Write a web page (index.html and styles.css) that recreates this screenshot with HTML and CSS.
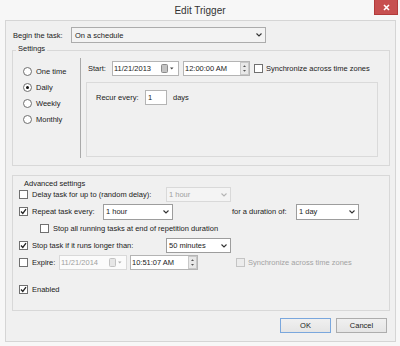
FILE: index.html
```html
<!DOCTYPE html>
<html lang="en">
<head>
    <meta charset="UTF-8">
    <title>Edit Trigger</title>
    <link rel="stylesheet" href="styles.css">
</head>
<body>
    <div class="window">
        <div class="titlebar">
            <span></span>
            <span class="title">Edit Trigger</span>
            <span class="close-btn">
                <svg viewBox="0 0 7 7" width="7" height="7"><path d="M1 1L6 6M6 1L1 6" stroke="#fff" stroke-width="1.6" fill="none"/></svg>
            </span>
        </div>
        <div class="client">
            <div class="begin-row">
                <span class="begin-label">Begin the task:</span>
                <div class="combo combo-begin">
                    <span>On a schedule</span>
                    <svg class="chevron" viewBox="0 0 6 4"><path d="M0.5 0.5L3 3L5.5 0.5" stroke="#333" stroke-width="1.1" fill="none"/></svg>
                </div>
            </div>

            <div class="group settings">
                <div class="group-title">Settings</div>
                <div class="settings-body">
                    <div class="recurrence">
                        <div class="radio-row"><span class="radio"></span>One time</div>
                        <div class="radio-row"><span class="radio on"></span>Daily</div>
                        <div class="radio-row"><span class="radio"></span>Weekly</div>
                        <div class="radio-row"><span class="radio"></span>Monthly</div>
                    </div>
                    <div class="schedule">
                        <div class="start-row">
                            <span class="start-label">Start:</span>
                            <div class="field date-field">
                                <span>11/21/2013</span>
                                <svg class="cal" viewBox="0 0 13 9"><rect x="0.5" y="0.5" width="6" height="8" rx="1" fill="#c4c4c4" stroke="#8c8c8c"/><path d="M9 3.5H12.5L10.75 5.5Z" fill="#444"/></svg>
                            </div>
                            <div class="field time-field">
                                <span>12:00:00 AM</span>
                                <span class="spin"><svg viewBox="0 0 7 11"><path d="M2 4H5L3.5 2.2Z M2 7H5L3.5 8.8Z" fill="#555"/></svg></span>
                            </div>
                            <span class="checkbox sync-check"></span>
                            <span>Synchronize across time zones</span>
                        </div>
                        <div class="recur-panel">
                            <div class="recur-row">
                                <span class="recur-label">Recur every:</span>
                                <div class="field recur-input">1</div>
                                <span class="days">days</span>
                            </div>
                        </div>
                    </div>
                </div>
            </div>

            <div class="group advanced">
                <div class="group-title">Advanced settings</div>
                <div class="adv-row">
                    <span class="checkbox"></span>
                    <span class="wide-label">Delay task for up to (random delay):</span>
                    <div class="combo combo-small disabled">
                        <span>1 hour</span>
                        <svg class="chevron" viewBox="0 0 6 4"><path d="M0.5 0.5L3 3L5.5 0.5" stroke="#b5b5b5" stroke-width="1.1" fill="none"/></svg>
                    </div>
                </div>
                <div class="adv-row">
                    <span class="checkbox checked"><svg viewBox="0 0 7 7"><path d="M1 3.5L2.8 5.5L6 1.2" stroke="#222" stroke-width="1.3" fill="none"/></svg></span>
                    <span class="repeat-label">Repeat task every:</span>
                    <div class="combo combo-white repeat-combo">
                        <span>1 hour</span>
                        <svg class="chevron" viewBox="0 0 6 4"><path d="M0.5 0.5L3 3L5.5 0.5" stroke="#333" stroke-width="1.1" fill="none"/></svg>
                    </div>
                    <span class="duration-label">for a duration of:</span>
                    <div class="combo combo-white duration-combo">
                        <span>1 day</span>
                        <svg class="chevron" viewBox="0 0 6 4"><path d="M0.5 0.5L3 3L5.5 0.5" stroke="#333" stroke-width="1.1" fill="none"/></svg>
                    </div>
                </div>
                <div class="adv-row sub-row">
                    <span class="checkbox"></span>
                    <span>Stop all running tasks at end of repetition duration</span>
                </div>
                <div class="adv-row">
                    <span class="checkbox checked"><svg viewBox="0 0 7 7"><path d="M1 3.5L2.8 5.5L6 1.2" stroke="#222" stroke-width="1.3" fill="none"/></svg></span>
                    <span class="wide-label">Stop task if it runs longer than:</span>
                    <div class="combo combo-white combo-small">
                        <span>50 minutes</span>
                        <svg class="chevron" viewBox="0 0 6 4"><path d="M0.5 0.5L3 3L5.5 0.5" stroke="#333" stroke-width="1.1" fill="none"/></svg>
                    </div>
                </div>
                <div class="adv-row">
                    <span class="checkbox"></span>
                    <span class="expire-label">Expire:</span>
                    <div class="field date-field expire-date disabled">
                        <span>11/21/2014</span>
                        <svg class="cal" viewBox="0 0 13 9"><rect x="0.5" y="0.5" width="6" height="8" rx="1" fill="#e6e6e6" stroke="#c2c2c2"/><path d="M9 3.5H12.5L10.75 5.5Z" fill="#b0b0b0"/></svg>
                    </div>
                    <div class="field time-field expire-time">
                        <span>10:51:07 AM</span>
                        <span class="spin"><svg viewBox="0 0 7 11"><path d="M2 4H5L3.5 2.2Z M2 7H5L3.5 8.8Z" fill="#555"/></svg></span>
                    </div>
                    <span class="checkbox disabled expire-sync"></span>
                    <span class="muted">Synchronize across time zones</span>
                </div>
                <div class="adv-row enabled-row">
                    <span class="checkbox checked"><svg viewBox="0 0 7 7"><path d="M1 3.5L2.8 5.5L6 1.2" stroke="#222" stroke-width="1.3" fill="none"/></svg></span>
                    <span>Enabled</span>
                </div>
            </div>

            <div class="buttons">
                <button class="btn btn-default">OK</button>
                <button class="btn">Cancel</button>
            </div>
        </div>
    </div>
</body>
</html>
```

FILE: styles.css
```css
* {
    box-sizing: border-box;
}
body {
    margin: 0;
    background-color: #f7f7f7;
    font-family: "Liberation Sans", Arial, sans-serif;
    font-size: 7.5px;
    color: #1b1b1b;
}
.window {
    width: 400px;
    height: 346px;
    background-color: #f7f7f7;
}
.titlebar {
    display: grid;
    grid-template-columns: 1fr auto 1fr;
    align-items: center;
    height: 20px;
}
.title {
    font-size: 10px;
    line-height: 1;
    padding-top: 1px;
    color: #333;
}
.close-btn {
    justify-self: end;
    align-self: start;
    display: flex;
    align-items: center;
    justify-content: center;
    width: 24px;
    height: 15px;
    margin-right: 2px;
    background-color: #c75050;
    border: 1px solid #b23b3b;
    border-top: none;
}
.client {
    margin-left: 5px;
    width: 391px;
    height: 322px;
    border: 1px solid #d5d5d5;
    background-color: #f0f0f0;
}
.begin-row {
    display: flex;
    align-items: center;
    height: 16px;
    margin-top: 6px;
    padding-left: 7px;
}
.begin-label {
    width: 58px;
}
.combo {
    display: flex;
    align-items: center;
    justify-content: space-between;
    height: 15px;
    border: 1px solid #acacac;
    background-color: #f3f3f3;
    padding: 0 3px 0 2px;
}
.combo-begin {
    width: 195px;
    height: 16px;
    padding-left: 3px;
}
.combo-white {
    background-color: #fff;
    border-color: #9d9d9d;
}
.combo-small {
    width: 65px;
}
.combo.disabled {
    background-color: #f4f4f4;
    border-color: #d9d9d9;
    color: #a0a0a0;
}
.chevron {
    width: 6px;
    height: 4px;
}
.group {
    border: 1px solid #d8d8d8;
    margin: 0 5px 0 6px;
}
.group-title {
    display: table;
    margin: -7px 0 -3px 3px;
    padding: 0 2px;
    line-height: 10px;
    background-color: #f0f0f0;
}
.settings {
    margin-top: 7px;
    padding-bottom: 7px;
}
.settings-body {
    display: flex;
}
.recurrence {
    width: 67px;
    padding-top: 12px;
}
.radio-row {
    display: flex;
    align-items: center;
    height: 16px;
    padding-left: 10px;
}
.radio {
    display: flex;
    align-items: center;
    justify-content: center;
    width: 9px;
    height: 9px;
    margin-right: 4px;
    border: 1px solid #6f6f6f;
    border-radius: 50%;
    background-color: #fff;
}
.radio.on::after {
    content: "";
    width: 3px;
    height: 3px;
    border-radius: 50%;
    background-color: #111;
}
.schedule {
    flex: 1;
    height: 100px;
    margin-top: 7px;
    padding: 3px 0 0 7px;
    border-left: 1px solid #a9a9a9;
}
.start-row {
    display: flex;
    align-items: center;
    height: 15px;
}
.start-label {
    width: 24px;
}
.field {
    display: flex;
    align-items: center;
    height: 15px;
    border: 1px solid #b4b4b4;
    background-color: #fff;
    padding-left: 1px;
}
.field.disabled {
    border-color: #d9d9d9;
    background-color: #fbfbfb;
    color: #a0a0a0;
}
.date-field {
    width: 67px;
    justify-content: space-between;
    padding-right: 4px;
}
.cal {
    width: 13px;
    height: 9px;
}
.time-field {
    width: 67px;
    margin-left: 4px;
}
.spin {
    display: flex;
    width: 9px;
    height: 13px;
    margin-left: auto;
    border: 1px solid #c8c8c8;
    background-color: #e8e8e8;
}
.spin svg {
    width: 7px;
    height: 11px;
}
.checkbox {
    display: flex;
    align-items: center;
    justify-content: center;
    flex-shrink: 0;
    width: 9px;
    height: 9px;
    border: 1px solid #707070;
    background-color: #fff;
}
.checkbox svg {
    width: 7px;
    height: 7px;
}
.checkbox.disabled {
    border-color: #c4c4c4;
    background-color: #ececec;
}
.sync-check {
    margin: 0 3px 0 4px;
}
.recur-panel {
    width: 292px;
    height: 75px;
    margin: 6px 0 0 -2px;
    padding: 7px 0 0 9px;
    border: 1px solid #dadada;
}
.recur-row {
    display: flex;
    align-items: center;
    height: 15px;
}
.recur-label {
    width: 49px;
}
.recur-input {
    width: 22px;
    padding-left: 2px;
}
.days {
    margin-left: 6px;
}
.advanced {
    margin-top: 9px;
    padding: 10px 0 12px 6px;
}
.adv-row {
    display: flex;
    align-items: center;
    height: 17px;
}
.adv-row > .checkbox {
    margin-right: 4px;
}
.wide-label {
    width: 134px;
}
.repeat-label {
    width: 71px;
}
.repeat-combo {
    width: 70px;
    height: 16px;
}
.duration-label {
    width: 64px;
    margin-left: 59px;
}
.duration-combo {
    width: 63px;
    height: 16px;
}
.sub-row {
    padding-left: 21px;
}
.expire-label {
    width: 27px;
}
.expire-date {
    width: 68px;
}
.expire-time {
    width: 68px;
    margin-left: 3px;
}
.adv-row > .expire-sync {
    margin: 0 3px 0 38px;
}
.muted {
    color: #a3a3a3;
}
.enabled-row {
    margin-top: 10px;
}
.buttons {
    display: flex;
    justify-content: flex-end;
    gap: 5px;
    margin: 7px 8px 0 0;
}
.btn {
    width: 51px;
    height: 15px;
    padding: 0;
    border: 1px solid #adadad;
    background: linear-gradient(#f0f0f0, #e5e5e5);
    font-family: "Liberation Sans", Arial, sans-serif;
    font-size: 7.5px;
    color: #1b1b1b;
}
.btn-default {
    border-color: #7aa7dd;
}
```
